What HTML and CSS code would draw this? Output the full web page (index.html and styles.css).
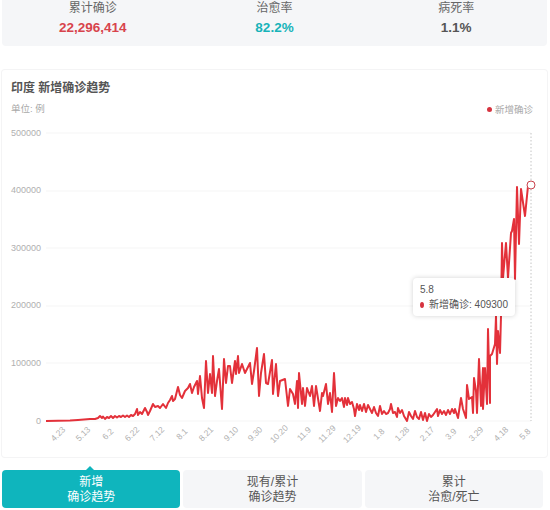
FILE: index.html
```html
<!DOCTYPE html>
<html lang="zh">
<head>
<meta charset="utf-8">
<title>印度 新增确诊趋势</title>
<link rel="stylesheet" href="styles.css">
</head>
<body>
<section class="stats">
  <div class="stat"><div class="stat-label">累计确诊</div><div class="stat-value red">22,296,414</div></div>
  <div class="stat"><div class="stat-label">治愈率</div><div class="stat-value teal">82.2%</div></div>
  <div class="stat"><div class="stat-label">病死率</div><div class="stat-value">1.1%</div></div>
</section>

<section class="card">
  <h2 class="title">印度 新增确诊趋势</h2>
  <div class="meta">
    <span>单位: 例</span>
    <span class="legend"><i class="dot"></i>新增确诊</span>
  </div>
  <div class="chart">
    <svg class="plot" viewBox="2 122 545 335" width="545" height="335" aria-label="新增确诊趋势图">
      <g class="grid">
        <line x1="46" x2="531" y1="132" y2="132"/>
        <line x1="46" x2="531" y1="190" y2="190"/>
        <line x1="46" x2="531" y1="247" y2="247"/>
        <line x1="46" x2="531" y1="305" y2="305"/>
        <line x1="46" x2="531" y1="362" y2="362"/>
        <line x1="46" x2="531" y1="420" y2="420"/>
      </g>
      <g class="ylabels">
        <text x="41" y="135">500000</text>
        <text x="41" y="192">400000</text>
        <text x="41" y="250">300000</text>
        <text x="41" y="307">200000</text>
        <text x="41" y="365">100000</text>
        <text x="41" y="423">0</text>
      </g>
      <g class="xlabels">
        <text transform="translate(60 435) rotate(-45)">4.23</text>
        <text transform="translate(85 435) rotate(-45)">5.13</text>
        <text transform="translate(110 435) rotate(-45)">6.2</text>
        <text transform="translate(134 435) rotate(-45)">6.22</text>
        <text transform="translate(159 435) rotate(-45)">7.12</text>
        <text transform="translate(184 435) rotate(-45)">8.1</text>
        <text transform="translate(208 435) rotate(-45)">8.21</text>
        <text transform="translate(233 435) rotate(-45)">9.10</text>
        <text transform="translate(257 435) rotate(-45)">9.30</text>
        <text transform="translate(281 435) rotate(-45)">10.20</text>
        <text transform="translate(306 435) rotate(-45)">11.9</text>
        <text transform="translate(329 435) rotate(-45)">11.29</text>
        <text transform="translate(354 435) rotate(-45)">12.19</text>
        <text transform="translate(381 435) rotate(-45)">1.8</text>
        <text transform="translate(404 435) rotate(-45)">1.28</text>
        <text transform="translate(429 435) rotate(-45)">2.17</text>
        <text transform="translate(453 435) rotate(-45)">3.9</text>
        <text transform="translate(478 435) rotate(-45)">3.29</text>
        <text transform="translate(503 435) rotate(-45)">4.18</text>
        <text transform="translate(527 435) rotate(-45)">5.8</text>
      </g>
      <line class="cursor" x1="531" x2="531" y1="132" y2="420"/>
      <polyline class="series" points="46,420 70,419.5 78,419 90,418 95,418 98,417 100,415 102,417 103,415.5 105,418 107,416 109,417 111,415 113,417 115,415 117,416.5 119,415 121,416 123,414.5 125,416 127,414.5 129,416 131,414 133,415 135,413 137,408 138,414 140,411 142,413 145,407 147,411 148,414 150,410 153,403 155,406 158,405 160,407 163,403 166,407 168,402 170,399 172,395 173,400 175,398 178,386 180,394 182,397 185,390 188,387 190,383 192,392 194,386 197,380 198,393 200,375 202,397 204,407 206,360 208,392 210,373 212,392 213,355 215,395 217,380 219,368 222,408 224,358 226,382 228,365 230,365 232,382 235,360 236,373 238,355 239,372 242,363 245,372 248,366 250,362 252,383 254,370 257,347 259,395 261,372 264,353 266,382 268,383 272,359 273,393 276,363 278,395 280,380 285,378 288,405 290,388 293,393 295,403 297,380 298,407 299,372 302,403 303,387 305,405 307,387 310,395 312,385 314,405 316,385 320,410 322,392 323,395 326,383 328,403 330,392 332,411 334,372 336,405 338,397 340,400 342,397 344,406 345,397 347,404 348,397 350,403 352,401 354,408 355,415 357,403 359,409 360,404 362,410 364,403 366,411 368,404 370,408 372,412 374,406 376,412 378,415 380,405 382,413 384,410 386,413 388,412 390,408 391,403 393,412 395,411 397,416 398,407 400,412 402,409 404,415 407,420 409,411 411,415 413,418 415,410 417,416 419,418 421,411 423,419 425,412 427,420 429,413 431,416 433,414 435,411 437,408 438,415 440,409 442,413 444,410 446,414 448,409 450,413 452,408 454,412 455,408 458,417 461,397 463,408 466,417 467,384 469,398 472,396 473,412 474,377 476,390 477,412 479,358 481,405 483,367 483,408 485,367 487,403 488,328 490,402 490,355 492,353 495,343 496,315 497,363 498,330 500,352 501,315 502,242 503,277 506,242 508,277 511,232 512,230 514,218 515,278 517,186 519,243 521,188 525,215 528,185 531,184"/>
      <circle class="end" cx="531" cy="184" r="4"/>
    </svg>
    <div class="tooltip">
      <div class="tip-date">5.8</div>
      <div class="tip-row"><i class="dot tip-dot"></i>新增确诊: 409300</div>
    </div>
  </div>
</section>

<nav class="tabs">
  <div class="tab active">新增<br>确诊趋势</div>
  <div class="tab">现有/累计<br>确诊趋势</div>
  <div class="tab">累计<br>治愈/死亡</div>
</nav>
</body>
</html>
```

FILE: styles.css
```css
* { box-sizing: border-box; }
html, body { margin: 0; padding: 0; }
body {
  width: 550px;
  height: 510px;
  overflow: hidden;
  background: #fff;
  color: #555;
  font-family: "Liberation Sans", "Noto Sans CJK SC", sans-serif;
}
.stats {
  display: flex;
  height: 46px;
  margin: 0 3px 0 2px;
  background: #f5f6f8;
  border-radius: 0 0 4px 4px;
}
.stat { flex: 1; text-align: center; padding-top: 1px; }
.stat-label { font-size: 12px; line-height: 15px; color: #666; }
.stat-value { margin-top: 4px; font-size: 13.5px; line-height: 16px; font-weight: 600; }
.red { color: #d8444c; }
.teal { color: #17b3b9; }
.card {
  height: 387px;
  margin: 24px 3px 0 2px;
  border-radius: 3px;
  box-shadow: 0 0 0 1px #f4f4f5;
}
.title {
  margin: 0;
  padding: 11px 0 0 9px;
  font-size: 12px;
  line-height: 15px;
  font-weight: 600;
  color: #555;
}
.meta {
  display: flex;
  justify-content: space-between;
  align-items: center;
  height: 14px;
  margin-top: 5px;
  padding: 0 14px 0 9px;
  font-size: 9.5px;
  color: #a9a9a9;
}
.legend { display: flex; align-items: center; gap: 3px; padding-top: 2px; }
.dot {
  display: inline-block;
  width: 5px;
  height: 5px;
  border-radius: 50%;
  background: #d6333f;
}
.chart { position: relative; margin-top: 8px; }
.plot { display: block; }
.grid line { stroke: #f5f5f5; stroke-width: 1; }
.ylabels text { font-size: 9px; fill: #b0b0b0; text-anchor: end; }
.xlabels text { font-size: 8.5px; fill: #b0b0b0; text-anchor: middle; }
.cursor { stroke: #c4c4c4; stroke-width: 1; stroke-dasharray: 1.5 2; }
.series { fill: none; stroke: #e3313a; stroke-width: 2; stroke-linejoin: round; }
.end { fill: #fff; stroke: #c9424c; stroke-width: 1; }
.tooltip {
  position: absolute;
  left: 411px;
  top: 155px;
  width: 102px;
  height: 38px;
  padding: 5px 7px;
  background: #fff;
  border-radius: 4px;
  box-shadow: 0 0 5px rgba(0, 0, 0, .18);
  font-size: 10px;
  line-height: 13px;
  color: #555;
}
.tip-row { display: flex; align-items: center; margin-top: 2px; white-space: nowrap; }
.tip-dot { width: 6px; height: 6px; margin-right: 5px; }
.tabs {
  display: flex;
  gap: 3px;
  margin-top: 13px;
  padding: 0 7px 0 2px;
}
.tab {
  position: relative;
  flex: 1;
  height: 38px;
  padding-top: 5px;
  background: #f5f6f8;
  border-radius: 4px;
  text-align: center;
  font-size: 12px;
  line-height: 15px;
  color: #555;
}
.tab.active { background: #0fb5bd; color: #fff; }
.tab.active::before {
  content: "";
  position: absolute;
  left: 84px;
  top: -4px;
  border-left: 4px solid transparent;
  border-right: 4px solid transparent;
  border-bottom: 4px solid #0fb5bd;
}
```
